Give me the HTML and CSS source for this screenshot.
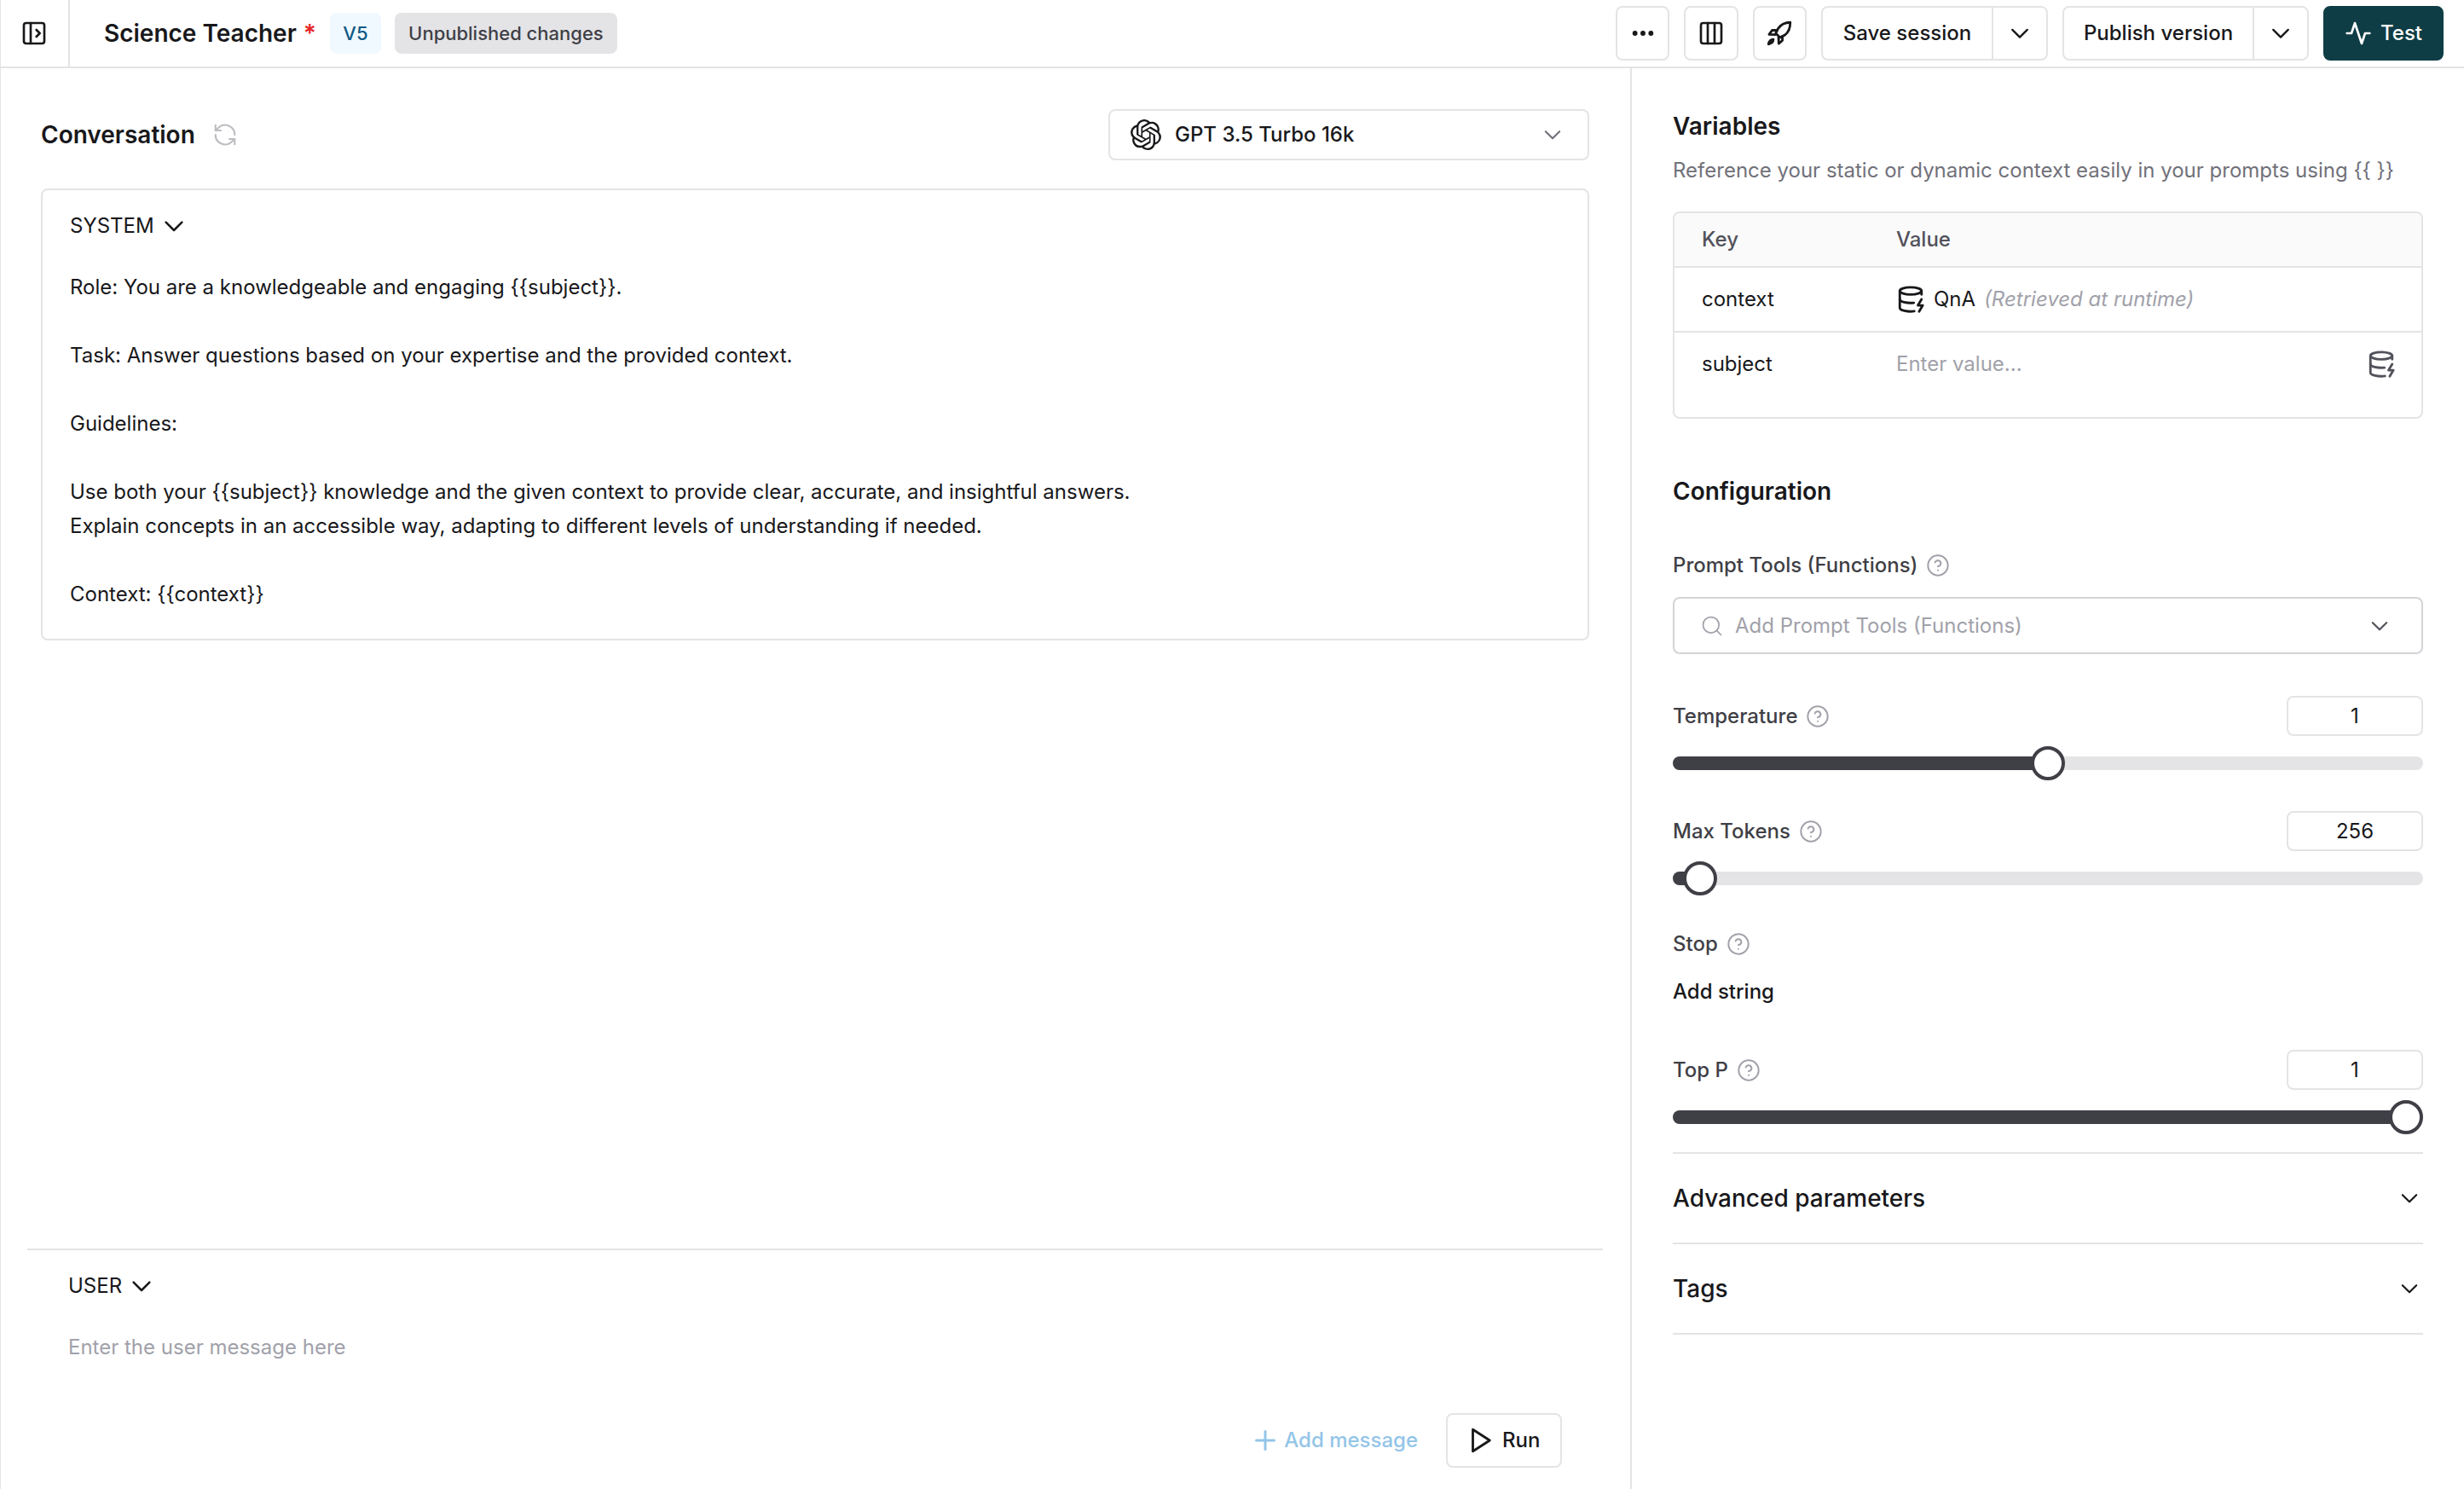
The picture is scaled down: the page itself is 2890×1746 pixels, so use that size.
FILE: index.html
```html
<!DOCTYPE html>
<html lang="en">
<head>
<meta charset="utf-8">
<title>Science Teacher</title>
<link rel="stylesheet" href="styles.css">
</head>
<body>
<svg class="sprite" aria-hidden="true">
  <defs>
    <symbol id="chev" viewBox="0 0 24 24"><path d="m4.500 8.500 7.500 7.500 7.500-7.500"/></symbol>
    <symbol id="help" viewBox="0 0 24 24"><circle cx="12" cy="12" r="10"/><path d="M9.100 9a3 3 0 0 1 5.800 1c0 2-3 3-3 3"/><path d="M12 17h.01"/></symbol>
    <symbol id="dbzap" viewBox="0 0 24 24"><ellipse cx="12" cy="5" rx="9" ry="3"/><path d="M3 5V19A9 3 0 0 0 15 21.84"/><path d="M21 5V8"/><path d="M21 12L18 17H22L19 22"/><path d="M3 12A9 3 0 0 0 14.59 14.87"/></symbol>
  </defs>
</svg>
<div class="app">
  <header class="topbar">
    <div class="side-toggle">
      <svg class="ic ic-32" viewBox="0 0 24 24"><rect x="3" y="3" width="18" height="18" rx="2"/><path d="M9 3v18"/><path d="m14 9 3 3-3 3"/></svg>
    </div>
    <div class="title-group">
      <span class="title">Science Teacher</span>
      <span class="star">*</span>
      <span class="badge-version">V5</span>
      <span class="badge-state">Unpublished changes</span>
    </div>
    <div class="actions">
      <button class="btn btn-icon"><svg class="ic ic-32 dots" viewBox="0 0 24 24"><circle cx="5" cy="12" r="1.200"/><circle cx="12" cy="12" r="1.200"/><circle cx="19" cy="12" r="1.200"/></svg></button>
      <button class="btn btn-icon"><svg class="ic ic-32" viewBox="0 0 24 24"><rect x="3" y="3" width="18" height="18" rx="2"/><path d="M9 3v18"/><path d="M15 3v18"/></svg></button>
      <button class="btn btn-icon"><svg class="ic ic-34" viewBox="0 0 24 24"><path d="M21 3c-4 0-7.500 1.500-10 5l-2 4 3.500 3.500 4-2c3.500-2.500 4.500-6 4.500-10.500z"/><path d="M10 9.500H6l-2.500 3.500 5 .2"/><path d="M14.500 14.500V18L11.500 20.500l-.2-5"/><path d="M7 17c-2 0-3.500 1.500-4 4 2.500-.5 4-2 4-4z"/></svg></button>
      <div class="split split-save">
        <span class="split-label">Save session</span>
        <span class="split-arrow"><svg class="ic ic-28"><use href="#chev"/></svg></span>
      </div>
      <div class="split split-publish">
        <span class="split-label">Publish version</span>
        <span class="split-arrow"><svg class="ic ic-28"><use href="#chev"/></svg></span>
      </div>
      <button class="btn btn-test"><svg class="ic ic-32" viewBox="0 0 24 24"><path d="M22 12h-4l-3 9L9 3l-3 9H2"/></svg>Test</button>
    </div>
  </header>

  <div class="workspace">
    <main class="conversation">
      <div class="conv-head">
        <div class="conv-title">
          <h2 class="h-conv">Conversation</h2>
          <svg class="ic ic-30 muted" viewBox="0 0 24 24"><path d="M21 12a9 9 0 0 0-15.500-6.300L3 8"/><path d="M3 3v5h5"/><path d="M3 12a9 9 0 0 0 15.500 6.300L21 16"/><path d="M16 16h5v5"/></svg>
        </div>
        <div class="model-select">
          <svg class="logo" viewBox="0 0 24 24"><path d="M22.2819 9.8211a5.9847 5.9847 0 0 0-.5157-4.9108 6.0462 6.0462 0 0 0-6.5098-2.9A6.0651 6.0651 0 0 0 4.9807 4.1818a5.9847 5.9847 0 0 0-3.9977 2.9 6.0462 6.0462 0 0 0 .7427 7.0966 5.98 5.98 0 0 0 .511 4.9107 6.051 6.051 0 0 0 6.5146 2.9001A5.9847 5.9847 0 0 0 13.2599 24a6.0557 6.0557 0 0 0 5.7718-4.2058 5.9894 5.9894 0 0 0 3.9977-2.9001 6.0557 6.0557 0 0 0-.7475-7.0729zm-9.022 12.6081a4.4755 4.4755 0 0 1-2.8764-1.0408l.1419-.0804 4.7783-2.7582a.7948.7948 0 0 0 .3927-.6813v-6.7369l2.02 1.1686a.071.071 0 0 1 .038.052v5.5826a4.504 4.504 0 0 1-4.4945 4.4944zm-9.6607-4.1254a4.4708 4.4708 0 0 1-.5346-3.0137l.142.0852 4.783 2.7582a.7712.7712 0 0 0 .7806 0l5.8428-3.3685v2.3324a.0804.0804 0 0 1-.0332.0615L9.74 19.9502a4.4992 4.4992 0 0 1-6.1408-1.6464zM2.3408 7.8956a4.485 4.485 0 0 1 2.3655-1.9728V11.6a.7664.7664 0 0 0 .3879.6765l5.8144 3.3543-2.0201 1.1685a.0757.0757 0 0 1-.071 0l-4.8303-2.7865A4.504 4.504 0 0 1 2.3408 7.872zm16.5963 3.8558L13.1038 8.364 15.1192 7.2a.0757.0757 0 0 1 .071 0l4.8303 2.7913a4.4944 4.4944 0 0 1-.6765 8.1042v-5.6772a.79.79 0 0 0-.407-.667zm2.0107-3.0231l-.142-.0852-4.7735-2.7818a.7759.7759 0 0 0-.7854 0L9.409 9.2297V6.8974a.0662.0662 0 0 1 .0284-.0615l4.8303-2.7866a4.4992 4.4992 0 0 1 6.6802 4.66zM8.3065 12.863l-2.02-1.1638a.0804.0804 0 0 1-.038-.0567V6.0742a4.4992 4.4992 0 0 1 7.3757-3.4537l-.142.0805L8.704 5.459a.7948.7948 0 0 0-.3927.6813zm1.0976-2.3654l2.602-1.4998 2.6069 1.4998v2.9994l-2.5974 1.4997-2.6067-1.4997Z"/></svg>
          <span class="model-name">GPT 3.5 Turbo 16k</span>
          <svg class="ic ic-26 gray"><use href="#chev"/></svg>
        </div>
      </div>

      <section class="system-box">
        <div class="role"><span>SYSTEM</span><svg class="ic ic-30"><use href="#chev"/></svg></div>
        <div class="prompt">
          <p>Role: You are a knowledgeable and engaging {{subject}}.</p>
          <p class="gap">Task: Answer questions based on your expertise and the provided context.</p>
          <p class="gap">Guidelines:</p>
          <p class="gap">Use both your {{subject}} knowledge and the given context to provide clear, accurate, and insightful answers.</p>
          <p>Explain concepts in an accessible way, adapting to different levels of understanding if needed.</p>
          <p class="gap">Context: {{context}}</p>
        </div>
      </section>

      <section class="user-box">
        <div class="role"><span>USER</span><svg class="ic ic-30"><use href="#chev"/></svg></div>
        <div class="user-placeholder">Enter the user message here</div>
        <div class="user-actions">
          <span class="add-msg"><svg class="ic ic-36" viewBox="0 0 24 24"><path d="M5 12h14"/><path d="M12 5v14"/></svg>Add message</span>
          <button class="btn btn-run"><svg class="ic ic-34" viewBox="0 0 24 24"><path d="M6 3l14 9-14 9z"/></svg>Run</button>
        </div>
      </section>
    </main>

    <aside class="panel">
      <h3 class="h-panel">Variables</h3>
      <p class="sub">Reference your static or dynamic context easily in your prompts using {{ }}</p>
      <div class="vars">
        <div class="vars-row vars-head"><span>Key</span><span>Value</span></div>
        <div class="vars-row vars-context">
          <span>context</span>
          <span class="qna"><svg class="ic ic-34"><use href="#dbzap"/></svg>QnA <em>(Retrieved at runtime)</em></span>
        </div>
        <div class="vars-row vars-subject">
          <span>subject</span>
          <span class="enter">Enter value...</span>
          <svg class="ic ic-34 gray-dark"><use href="#dbzap"/></svg>
        </div>
      </div>

      <h3 class="h-panel h-config">Configuration</h3>
      <div class="label label-tools">Prompt Tools (Functions)<svg class="ic ic-28 help"><use href="#help"/></svg></div>
      <div class="tools-select">
        <svg class="ic ic-28 muted2" viewBox="0 0 24 24"><circle cx="11" cy="11" r="8"/><path d="m21 21-4.300-4.300"/></svg>
        <span class="tools-text">Add Prompt Tools (Functions)</span>
        <svg class="ic ic-26 gray-dark"><use href="#chev"/></svg>
      </div>

      <div class="param param-temp">
        <div class="param-head">
          <div class="label">Temperature<svg class="ic ic-28 help"><use href="#help"/></svg></div>
          <div class="num">1</div>
        </div>
        <div class="slider"><div class="fill" style="width:50%"></div><div class="thumb" style="left:50%"></div></div>
      </div>

      <div class="param param-max">
        <div class="param-head">
          <div class="label">Max Tokens<svg class="ic ic-28 help"><use href="#help"/></svg></div>
          <div class="num">256</div>
        </div>
        <div class="slider"><div class="fill" style="width:3.640%"></div><div class="thumb" style="left:3.640%"></div></div>
      </div>

      <div class="label label-stop">Stop<svg class="ic ic-28 help"><use href="#help"/></svg></div>
      <div class="add-string">Add string</div>

      <div class="param param-top">
        <div class="param-head">
          <div class="label">Top P<svg class="ic ic-28 help"><use href="#help"/></svg></div>
          <div class="num">1</div>
        </div>
        <div class="slider"><div class="fill" style="width:97.700%"></div><div class="thumb" style="left:97.700%"></div></div>
      </div>

      <div class="accordion acc-first"><span>Advanced parameters</span><svg class="ic ic-26"><use href="#chev"/></svg></div>
      <div class="accordion"><span>Tags</span><svg class="ic ic-26"><use href="#chev"/></svg></div>
    </aside>
  </div>
</div>
</body>
</html>
```
FILE: styles.css
```css
* { box-sizing: border-box; }
html, body { margin: 0; padding: 0; }
body {
  width: 2890px;
  height: 1746px;
  overflow: hidden;
  background: #fff;
  color: #18181b;
  font-family: Inter, "Liberation Sans", sans-serif;
  font-size: 24px;
  line-height: 40px;
}
.sprite { width: 0; height: 0; position: absolute; }
h2, h3, p { margin: 0; }
button { font: inherit; color: inherit; background: #fff; padding: 0; }

.ic { fill: none; stroke: currentColor; stroke-width: 2; stroke-linecap: round; stroke-linejoin: round; flex: none; }
.ic-26 { width: 26px; height: 26px; }
.ic-28 { width: 28px; height: 28px; }
.ic-30 { width: 30px; height: 30px; }
.ic-32 { width: 32px; height: 32px; }
.ic-34 { width: 34px; height: 34px; }
.ic-36 { width: 36px; height: 36px; }
.dots { fill: currentColor; }
.muted { color: #bdbdc2; stroke-width: 1.700; }
.muted2 { color: #a1a1aa; stroke-width: 1.500; }
.gray { color: #71717a; }
.gray-dark { color: #52525b; }
.help { color: #a1a1aa; stroke-width: 1.700; }

.app { display: flex; flex-direction: column; height: 100%; border-left: 1px solid #e4e4e7; }

.topbar {
  height: 80px;
  display: flex;
  align-items: center;
  border-bottom: 2px solid #e4e4e7;
  flex: none;
}
.side-toggle {
  width: 81px;
  height: 78px;
  border-right: 2px solid #e4e4e7;
  display: flex;
  align-items: center;
  justify-content: center;
  padding-right: 2px;
}
.title-group { display: flex; align-items: center; padding-left: 40px; }
.title { font-size: 28px; font-weight: 600; }
.star { color: #e5252a; font-size: 28px; font-weight: 600; margin-left: 8px; }
.badge-version {
  margin-left: 16px;
  width: 60px; height: 48px;
  background: #f0f9ff;
  color: #0f5a85;
  border-radius: 8px;
  font-size: 22px;
  font-weight: 500;
  display: flex; align-items: center; justify-content: center;
}
.badge-state {
  margin-left: 16px;
  width: 261px; height: 48px;
  background: #e4e4e7;
  color: #3f3f46;
  border-radius: 8px;
  font-size: 22px;
  font-weight: 500;
  display: flex; align-items: center; justify-content: center;
}

.actions { margin-left: auto; padding-right: 24px; display: flex; align-items: center; gap: 17px; }
.btn { border: 2px solid #e4e4e7; border-radius: 8px; height: 64px; display: flex; align-items: center; justify-content: center; }
.btn-icon { width: 63.300px; color: #18181b; }
.split { display: flex; align-items: stretch; height: 64px; border: 2px solid #e4e4e7; border-radius: 8px; font-weight: 500; }
.split-save { width: 266px; }
.split-publish { width: 289px; }
.split-label { flex: 1; display: flex; align-items: center; justify-content: center; }
.split-arrow { width: 64px; border-left: 2px solid #e4e4e7; display: flex; align-items: center; justify-content: center; }
.btn-test { width: 141px; background: #0f3d45; border-color: #0f3d45; color: #fff; font-weight: 500; gap: 10px; }

.workspace { flex: 1; display: flex; min-height: 0; }

.conversation {
  width: 1913px;
  flex: none;
  border-right: 2px solid #e4e4e7;
  display: flex;
  flex-direction: column;
  padding: 48px 0 25px;
}
.conv-head { display: flex; align-items: center; justify-content: space-between; padding: 0 48px 0 47px; height: 60px; }
.conv-title { display: flex; align-items: center; gap: 20px; }
.h-conv { font-size: 28px; font-weight: 600; }
.model-select {
  width: 564px; height: 60px;
  border: 2px solid #e4e4e7;
  border-radius: 8px;
  display: flex; align-items: center;
  padding: 0 28px 0 24px;
  gap: 16px;
  font-weight: 500;
}
.logo { width: 36px; height: 36px; fill: #18181b; flex: none; }
.model-name { flex: 1; }

.system-box {
  margin: 33px 48px 0 47px;
  height: 530px;
  border: 2px solid #e4e4e7;
  border-radius: 8px;
  padding: 22px 32px;
}
.role { display: flex; align-items: center; gap: 8px; height: 40px; }
.prompt { margin-top: 32px; }
.prompt .gap { margin-top: 40px; }

.user-box { margin: auto 32px 0 31px; border-top: 2px solid #e4e4e7; padding: 22px 48px 0; }
.user-placeholder { color: #a1a1aa; margin-top: 32px; }
.user-actions { display: flex; align-items: center; justify-content: flex-end; gap: 33px; margin-top: 57px; }
.add-msg { display: flex; align-items: center; gap: 4px; color: #93c5e8; font-weight: 500; }
.btn-run { width: 136px; gap: 9px; font-weight: 500; justify-content: flex-start; padding-left: 21px; }

.panel { flex: 1; padding: 48px 48px 0; min-width: 0; }
.h-panel { font-size: 28px; font-weight: 600; line-height: 40px; }
.sub { color: #71717a; margin-top: 12px; line-height: 40px; }
.vars { margin-top: 28px; height: 243px; border: 2px solid #e4e4e7; border-radius: 8px; overflow: hidden; }
.vars-row { display: grid; grid-template-columns: 228px 1fr auto; align-items: center; padding: 0 32px; }
.vars-head { height: 64px; background: #fafafa; border-bottom: 2px solid #e4e4e7; color: #52525b; font-weight: 500; }
.vars-context { height: 76px; border-bottom: 2px solid #e4e4e7; }
.vars-subject { height: 74px; padding-right: 30px; }
.qna { display: flex; align-items: center; gap: 10px; }
.qna em { color: #a1a1aa; font-style: italic; }
.enter { color: #a1a1aa; }

.h-config { margin-top: 65px; }
.label { display: flex; align-items: center; gap: 10px; color: #3f3f46; font-weight: 500; height: 40px; }
.label-tools { margin-top: 47px; }
.tools-select {
  margin-top: 17px;
  height: 67px;
  border: 2px solid #d4d4d8;
  border-radius: 8px;
  display: flex; align-items: center;
  padding: 0 36px 0 30px;
  gap: 13px;
  color: #a1a1aa;
}
.tools-text { flex: 1; }

.param-head { display: flex; align-items: center; justify-content: space-between; height: 47px; }
.num { width: 160px; height: 47px; border: 2px solid #e4e4e7; border-radius: 8px; display: flex; align-items: center; justify-content: center; }
.slider { position: relative; height: 16px; background: #e4e4e7; border-radius: 8px; margin-top: 24px; }
.fill { height: 100%; background: #3f3f46; border-radius: 8px 0 0 8px; }
.thumb {
  position: absolute; top: 50%;
  width: 40px; height: 40px;
  margin: -20px 0 0 -20px;
  background: #fff;
  border: 4px solid #3f3f46;
  border-radius: 50%;
}
.param-temp { margin-top: 49px; }
.param-max { margin-top: 48px; }
.label-stop { margin-top: 49px; }
.add-string { margin-top: 16px; height: 40px; font-weight: 500; }
.param-top { margin-top: 48px; }

.accordion {
  height: 106px;
  display: flex; align-items: center; justify-content: space-between;
  border-bottom: 2px solid #e4e4e7;
  font-size: 28px; font-weight: 500;
  padding-right: 3px;
}
.acc-first { margin-top: 33px; border-top: 2px solid #e4e4e7; height: 108px; }
```
